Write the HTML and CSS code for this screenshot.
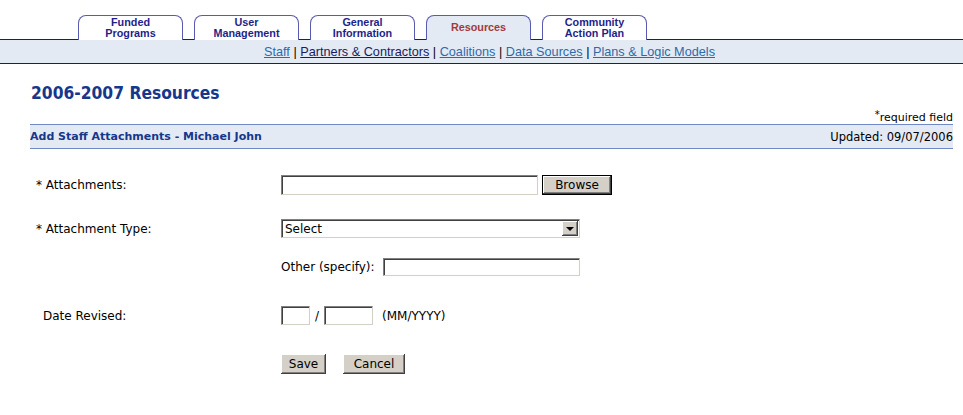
FILE: index.html
```html
<!DOCTYPE html>
<html lang="en">
<head>
    <meta charset="UTF-8" />
    <title>Add Staff Attachments - Resources</title>
    <link rel="stylesheet" href="styles.css">
</head>
<body>
    <div class="tabs">
        <a href="#" class="tab">Funded<br>Programs</a>
        <a href="#" class="tab">User<br>Management</a>
        <a href="#" class="tab">General<br>Information</a>
        <a href="#" class="tab active">Resources</a>
        <a href="#" class="tab">Community<br>Action Plan</a>
    </div>
    <div class="subnav">
        <a href="#">Staff</a> |
        <a href="#" class="visited">Partners &amp; Contractors</a> |
        <a href="#">Coalitions</a> |
        <a href="#">Data Sources</a> |
        <a href="#">Plans &amp; Logic Models</a>
    </div>

    <div class="content">
        <h1>2006-2007 Resources</h1>
        <div class="required-note"><sup>*</sup>required field</div>
        <div class="section-bar">
            <span class="section-title">Add Staff Attachments - Michael John</span>
            <span class="updated">Updated: 09/07/2006</span>
        </div>

        <form class="attach-form">
            <div class="form-row row-file">
                <label class="form-label">* Attachments:</label>
                <div class="form-field">
                    <input type="text" class="txt file-txt" />
                    <button type="button" class="btn btn-default">Browse</button>
                </div>
            </div>
            <div class="form-row row-type">
                <label class="form-label">* Attachment Type:</label>
                <div class="form-field">
                    <span class="select-box">
                        <select>
                            <option>Select</option>
                        </select>
                        <span class="select-arrow"></span>
                    </span>
                </div>
            </div>
            <div class="form-row row-other">
                <label class="form-label"></label>
                <div class="form-field">
                    <span>Other (specify):</span>
                    <input type="text" class="txt other-txt" />
                </div>
            </div>
            <div class="form-row row-date">
                <label class="form-label indent">Date Revised:</label>
                <div class="form-field">
                    <input type="text" class="txt month-txt" />
                    <span class="slash">/</span>
                    <input type="text" class="txt year-txt" />
                    <span class="hint">(MM/YYYY)</span>
                </div>
            </div>
            <div class="form-row row-buttons">
                <label class="form-label"></label>
                <div class="form-field">
                    <button type="button" class="btn save-btn">Save</button>
                    <button type="button" class="btn cancel-btn">Cancel</button>
                </div>
            </div>
        </form>
    </div>
</body>
</html>
```

FILE: styles.css
```css
* {
    margin: 0;
    padding: 0;
    box-sizing: border-box;
}

body {
    font-family: "DejaVu Sans", Verdana, sans-serif;
    font-size: 12px;
    color: #000;
    background-color: #fff;
}

/* tab strip */
.tabs {
    display: flex;
    align-items: flex-end;
    gap: 11px;
    padding-left: 78px;
    margin-top: 15px;
    height: 25px;
    position: relative;
    z-index: 1;
}

.tab {
    width: 105px;
    height: 25px;
    border: 1px solid #5a5ab0;
    border-bottom: none;
    border-radius: 8px 8px 0 0;
    background-color: #fff;
    display: flex;
    align-items: center;
    justify-content: center;
    text-align: center;
    font-family: "Liberation Sans", Arial, sans-serif;
    font-weight: bold;
    font-size: 10.8px;
    line-height: 11px;
    color: #1f1f8a;
    text-decoration: none;
    padding-bottom: 1px;
}

.tab.active {
    background-color: #e3eaf4;
    color: #a33a3a;
}

.subnav {
    margin-top: -1px;
    height: 25px;
    border-top: 1px solid #1a1a7a;
    border-bottom: 1px solid #1a1a7a;
    background-color: #e3eaf4;
    font-family: "Liberation Sans", Arial, sans-serif;
    font-size: 12.7px;
    line-height: 21px;
    padding-top: 2px;
    padding-left: 16px;
    text-align: center;
    color: #000;
}

.subnav a {
    color: #2f6aa6;
}

.subnav a.visited {
    color: #1a1a5e;
}

/* main content */
.content {
    padding: 0 10px 0 30px;
}

.content h1 {
    margin-top: 19px;
    font-family: "DejaVu Sans Condensed", "DejaVu Sans", sans-serif;
    font-size: 17.3px;
    line-height: 20px;
    font-weight: bold;
    color: #15378c;
    padding-left: 1px;
}

.required-note {
    margin-top: 8px;
    text-align: right;
    font-size: 11px;
    line-height: 13px;
}

.required-note sup {
    font-size: 10px;
    vertical-align: 3px;
    line-height: 0;
}

.section-bar {
    height: 25px;
    border-top: 1px solid #7088c6;
    border-bottom: 1px solid #7088c6;
    background-color: #e3eaf4;
    display: flex;
    justify-content: space-between;
    align-items: center;
}

.section-title {
    font-weight: bold;
    font-size: 11px;
    color: #15378c;
}

.updated {
    font-size: 11.5px;
    color: #000;
}

/* form */
.attach-form {
    display: flex;
    flex-direction: column;
}

.form-row {
    display: flex;
    align-items: center;
}

.row-file { margin-top: 26px; }
.row-type { margin-top: 24px; }
.row-other { margin-top: 20px; }
.row-date { margin-top: 30px; }
.row-buttons { margin-top: 29px; }

.form-label {
    width: 251px;
    padding-left: 6px;
}

.form-label.indent {
    padding-left: 13px;
}

.form-field {
    display: flex;
    align-items: center;
}

.txt {
    height: 19px;
    border: 1px solid;
    border-color: #808080 #d4d0c8 #d4d0c8 #808080;
    box-shadow: inset 1px 1px #404040;
    background-color: #fff;
    font-family: inherit;
    font-size: 12px;
}

.file-txt { width: 257px; height: 20px; }
.other-txt { width: 197px; height: 18px; margin-left: 8px; }
.month-txt { width: 29px; }
.year-txt { width: 49px; }

.slash {
    margin: 0 5px 0 5px;
}

.hint {
    margin-left: 9px;
}

.btn {
    height: 20px;
    background-color: #d4d0c8;
    border: none;
    box-shadow: inset -1px -1px #404040, inset 1px 1px #fff, inset -2px -2px #808080;
    font-family: inherit;
    font-size: 12px;
    color: #000;
    cursor: pointer;
}

.btn-default {
    width: 70px;
    margin-left: 4px;
    border: 1px solid #000;
}

.save-btn { width: 45px; }

.cancel-btn {
    width: 62px;
    margin-left: 17px;
}

.select-box {
    position: relative;
    display: block;
    width: 299px;
    height: 19px;
    border: 1px solid;
    border-color: #808080 #d4d0c8 #d4d0c8 #808080;
    box-shadow: inset 1px 1px #404040;
    background-color: #fff;
}

.select-box select {
    width: 100%;
    height: 100%;
    border: none;
    outline: none;
    background: transparent;
    appearance: none;
    -webkit-appearance: none;
    font-family: inherit;
    font-size: 12px;
    padding-left: 3px;
}

.select-arrow {
    position: absolute;
    top: 1px;
    right: 1px;
    width: 16px;
    height: 15px;
    background-color: #d4d0c8;
    box-shadow: inset -1px -1px #404040, inset 1px 1px #fff, inset -2px -2px #808080;
    pointer-events: none;
}

.select-arrow::after {
    content: "";
    position: absolute;
    left: 4px;
    top: 6px;
    border-left: 4px solid transparent;
    border-right: 4px solid transparent;
    border-top: 4px solid #000;
}
```
